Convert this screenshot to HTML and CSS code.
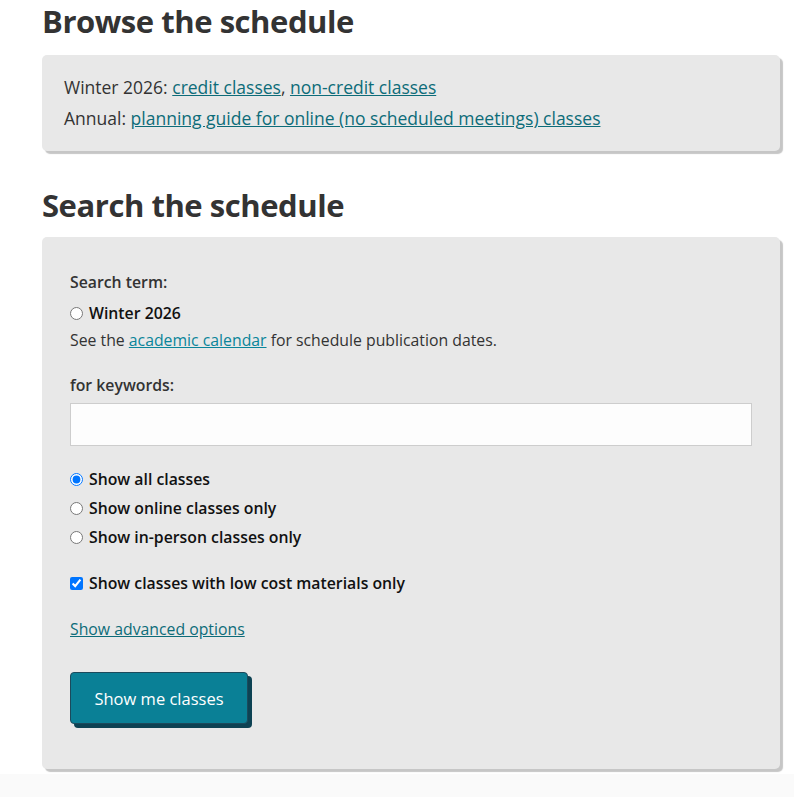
FILE: index.html
```html
<!DOCTYPE html>
<html lang="en">
<head>
    <meta charset="UTF-8">
    <meta name="viewport" content="width=device-width, initial-scale=1.0">
    <title>Class Schedule</title>
    <link rel="stylesheet" href="styles.css">
</head>
<body>
    <div class="page">
        <h1 class="section-title">Browse the schedule</h1>
        <div class="panel browse-panel">
            <p>Winter 2026: <a href="#">credit classes</a>, <a href="#">non-credit classes</a></p>
            <p>Annual: <a href="#">planning guide for online (no scheduled meetings) classes</a></p>
        </div>

        <h2 class="section-title search-title">Search the schedule</h2>
        <form class="panel search-panel">
            <div class="field-label">Search term:</div>
            <label class="option term-option"><input type="radio" name="term"> Winter 2026</label>
            <p class="hint">See the <a href="#" class="light-link">academic calendar</a> for schedule publication dates.</p>

            <label class="field-label keywords-label" for="keywords">for keywords:</label>
            <input type="text" id="keywords" class="text-input">

            <div class="option-group">
                <label class="option"><input type="radio" name="mode" checked> Show all classes</label>
                <label class="option"><input type="radio" name="mode"> Show online classes only</label>
                <label class="option"><input type="radio" name="mode"> Show in-person classes only</label>
            </div>

            <label class="option lowcost-option"><input type="checkbox" checked> Show classes with low cost materials only</label>

            <a href="#" class="advanced-link">Show advanced options</a>

            <div class="actions">
                <button type="button" class="submit-btn">Show me classes</button>
            </div>
        </form>
    </div>
    <div class="page-bottom"></div>
</body>
</html>
```

FILE: styles.css
```css
body {
    font-family: "Open Sans", "Liberation Sans", sans-serif;
    color: #333;
    background-color: #fff;
    margin: 0;
    padding: 0;
}
.page {
    width: 738px;
    margin-left: 42px;
}
.section-title {
    font-size: 31px;
    line-height: 40px;
    font-weight: 700;
    letter-spacing: -0.45px;
    margin: 1px 0 14px 0;
    color: #333;
}
.search-title {
    margin-top: 34px;
    margin-bottom: 12px;
}
.panel {
    background-color: #e8e8e8;
    border-radius: 5px;
    box-shadow: 3px 3px 1px #c6c6c6;
}
a {
    color: #0d6c79;
}
.browse-panel {
    padding: 17px 22px 17px;
    font-size: 17.5px;
    line-height: 31px;
}
.browse-panel p {
    margin: 0;
}
.search-panel {
    display: flex;
    flex-direction: column;
    align-items: flex-start;
    padding: 32px 28px 45px;
    font-size: 15.8px;
    line-height: 27px;
}
.field-label {
    font-weight: 600;
    color: #333;
}
.option {
    display: flex;
    align-items: center;
    font-weight: 600;
    color: #111;
    line-height: 29px;
}
.option input {
    width: 13px;
    height: 13px;
    margin: 0 6px 0 0;
}
.term-option {
    margin-top: 4px;
    line-height: 27px;
}
.hint {
    margin: 0;
}
.light-link {
    color: #0a859a;
}
.keywords-label {
    margin-top: 18px;
}
.text-input {
    box-sizing: border-box;
    width: 100%;
    height: 43px;
    margin-top: 4px;
    border: 1px solid #cdcdcd;
    background-color: #fdfdfd;
    font-family: inherit;
    font-size: 16px;
}
.option-group {
    margin-top: 19px;
}
.lowcost-option {
    margin-top: 17px;
}
.advanced-link {
    margin-top: 18px;
}
.actions {
    margin-top: 29px;
}
.submit-btn {
    width: 178px;
    height: 52px;
    border: 1px solid #1c4a5c;
    border-radius: 4px;
    background-color: #0a8096;
    color: #fff;
    font-family: inherit;
    font-size: 16.5px;
    box-shadow: 4px 4px 0 #0d4253;
    cursor: pointer;
}
.page-bottom {
    height: 30px;
    margin-top: 5px;
    background-color: #fafafa;
}
```
